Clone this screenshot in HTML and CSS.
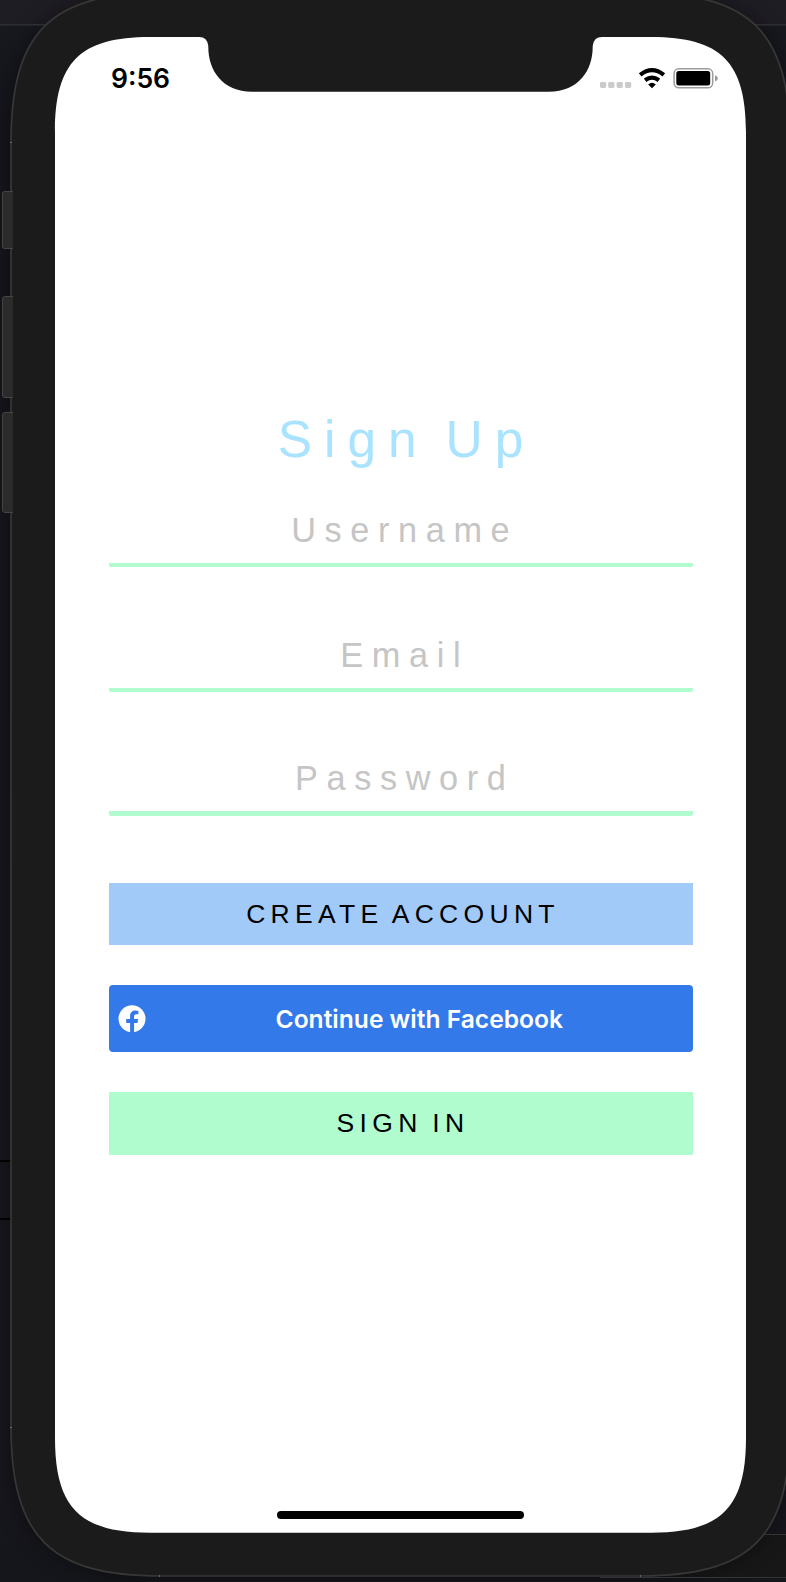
FILE: index.html
```
<!DOCTYPE html>
<html lang="en">
<head>
<meta charset="utf-8">
<title>Sign Up</title>
<link rel="stylesheet" href="styles.css">
</head>
<body>
<div class="stage">
  <svg class="device" width="786" height="1582" viewBox="0 0 786 1582" aria-hidden="true">
    <defs>
      <linearGradient id="desk" x1="0" y1="0" x2="0" y2="1">
        <stop offset="0" stop-color="#171a20"/><stop offset=".08" stop-color="#15151c"/><stop offset=".85" stop-color="#18171f"/><stop offset="1" stop-color="#15161b"/>
      </linearGradient>
      <filter id="soft" x="-10%" y="-10%" width="120%" height="120%"><feGaussianBlur stdDeviation="12"/></filter>
      <path id="body" d="M161-7H640C751-7 790 32 790 143V1426C790 1537 751 1576 640 1576H161C50 1576 11 1537 11 1426V143C11 32 50-7 161-7Z"/>
    </defs>
    <rect width="786" height="1582" fill="url(#desk)"/>
    <rect width="786" height="24" fill="#1f1d24"/>
    <path d="M0 1161H12M0 1219H12" stroke="#030304" stroke-width="2"/>
    <path d="M640 1534H786V1577H640Z" fill="#171717"/>
    <use href="#body" fill="#09090d" opacity=".42" filter="url(#soft)"/>
    <path d="M740 1534.500H786M600 1577.500H786" stroke="#343436"/>
    <path d="M0 24.800H50M740 24.800H786" stroke="#2e2d32" stroke-width="1.500"/>
    <use href="#body" fill="#1b1b1b" stroke="#373737" stroke-width="1.700"/>
    <path d="M10 142.500H12M10 1427.500H12M159.500 1575V1577M640.500 1575V1577" stroke="#666"/>
    <g fill="#2b2b2b" stroke="#444" stroke-width="1">
      <path d="M13 191.500H4.500Q2.500 191.500 2.500 193.500V246.500Q2.500 248.500 4.500 248.500H13"/>
      <path d="M13 296.500H5Q2.500 296.500 2.500 299V395Q2.500 397.500 5 397.500H13"/>
      <path d="M13 412.500H5Q2.500 412.500 2.500 415V510Q2.500 512.500 5 512.500H13"/>
    </g>
    <path fill="#fff" d="M150 37H199Q207.500 37 208.300 46C208 70 222 91.700 252 91.700H549C579 91.700 593 70 592.700 46Q593.500 37 602 37H651C721 37 746 62 746 132V1437.700C746 1507.700 721 1532.700 651 1532.700H150C80 1532.700 55 1507.700 55 1437.700V132C55 62 80 37 150 37Z"/>
  </svg>
  <main class="screen">
    <header class="status">
      <span class="time">9:56</span>
      <svg class="indicators" width="120" height="24" viewBox="0 0 120 24" role="img" aria-label="Wi-Fi on, battery full">
        <g fill="#cbcbcb"><rect x="2" y="16" width="6.200" height="6" rx="1.400"/><rect x="10.200" y="16" width="6.200" height="6" rx="1.400"/><rect x="18.600" y="16" width="6.200" height="6" rx="1.400"/><rect x="27" y="16" width="6.200" height="6" rx="1.400"/></g>
        <g fill="none" stroke="#000" stroke-width="4.200"><path d="M42.200 8.900Q54 -0.500 65.800 8.900"/><path d="M47.100 14.200Q54 9 60.900 14.200"/></g>
        <path d="M50.200 18.500Q54 15.200 57.800 18.500L54 22.200Z"/>
        <rect x="76.100" y="2.800" width="38.600" height="19" rx="4.700" fill="none" stroke="#9c9c9c" stroke-width="1.500"/>
        <rect x="78.300" y="5" width="33.900" height="14.600" rx="2.500"/>
        <path d="M117 9.200Q119.800 10 119.800 12.300Q119.800 14.600 117 15.400Z" fill="#999"/>
      </svg>
    </header>
    <form class="form">
      <h1 class="title">Sign Up</h1>
      <label class="field username">Username</label>
      <label class="field email">Email</label>
      <label class="field password">Password</label>
      <div class="button create">CREATE ACCOUNT</div>
      <div class="button facebook">
        <svg class="logo" width="28" height="28" viewBox="0 0 28 28" aria-hidden="true"><circle cx="14" cy="13.700" r="13.500" fill="#fff"/><path fill="#3479e9" d="M12.100 28V18.100H8.200V14.100H12.100V11.100C12.100 7.500 14.200 5.600 17.500 5.600Q19 5.600 20.400 5.900V9.300H18.500C16.700 9.300 16.100 10.300 16.100 11.500V14.100H20.100L19.500 18.100H16.100V28Z"/></svg>
        <span class="caption">Continue with Facebook</span>
      </div>
      <div class="button signin">SIGN IN</div>
    </form>
    <div class="home"></div>
  </main>
</div>
</body>
</html>
```

FILE: styles.css
```
* { box-sizing: border-box; }
body { margin: 0; background: #15151a; }
.stage { display: grid; width: 786px; height: 1582px; overflow: hidden; }
.device, .screen { grid-area: 1 / 1; }
.device { display: block; }
.screen {
  z-index: 1;
  display: flex;
  flex-direction: column;
  width: 691px;
  height: 1496px;
  margin: 37px 0 0 55px;
  font-family: "Liberation Sans", Arial, sans-serif;
}
.status {
  display: flex;
  justify-content: space-between;
  height: 54px;
  padding: 29px 28px 0 56px;
}
.time { font: 600 26.5px/25px Inter, sans-serif; }
.indicators { display: block; }
.form { display: flex; flex-direction: column; margin: 316px 53.5px 0 53.5px; }
.title {
  height: 65px;
  margin: 0;
  padding-left: 12px;
  color: #a9e3ff;
  font-size: 51.5px;
  font-weight: 400;
  line-height: 65px;
  letter-spacing: 12px;
  word-spacing: -9.5px;
  text-align: center;
}
.field {
  display: block;
  height: 58px;
  padding-left: 8.5px;
  border-bottom: 4px solid #b0fccf;
  border-radius: 2px;
  color: #c5c5c5;
  font-size: 34.3px;
  line-height: 42px;
  letter-spacing: 8.6px;
  text-align: center;
}
.username { margin-top: 37px; }
.email { margin-top: 67px; }
.password { height: 59px; margin-top: 65px; border-bottom-width: 5px; }
.button {
  height: 63px;
  padding-left: 5px;
  color: #000;
  font-size: 26.5px;
  line-height: 62px;
  letter-spacing: 5.3px;
  word-spacing: -3px;
  text-align: center;
}
.create { margin-top: 67px; height: 62px; background: #a2caf9; }
.facebook {
  display: flex;
  align-items: center;
  height: 67px;
  margin-top: 40px;
  padding: 0 0 0 9.5px;
  border-radius: 4px;
  background: #3479e9;
  color: #fff;
}
.logo { flex: none; }
.caption {
  flex: 1;
  padding-top: 2px;
  font: 600 24.6px/65px Inter, sans-serif;
  letter-spacing: 0;
  word-spacing: 0;
}
.signin { margin-top: 40px; background: #b0fccf; }
.home { width: 247px; height: 8px; margin: auto auto 14px 222px; border-radius: 4px; background: #000; }
```
